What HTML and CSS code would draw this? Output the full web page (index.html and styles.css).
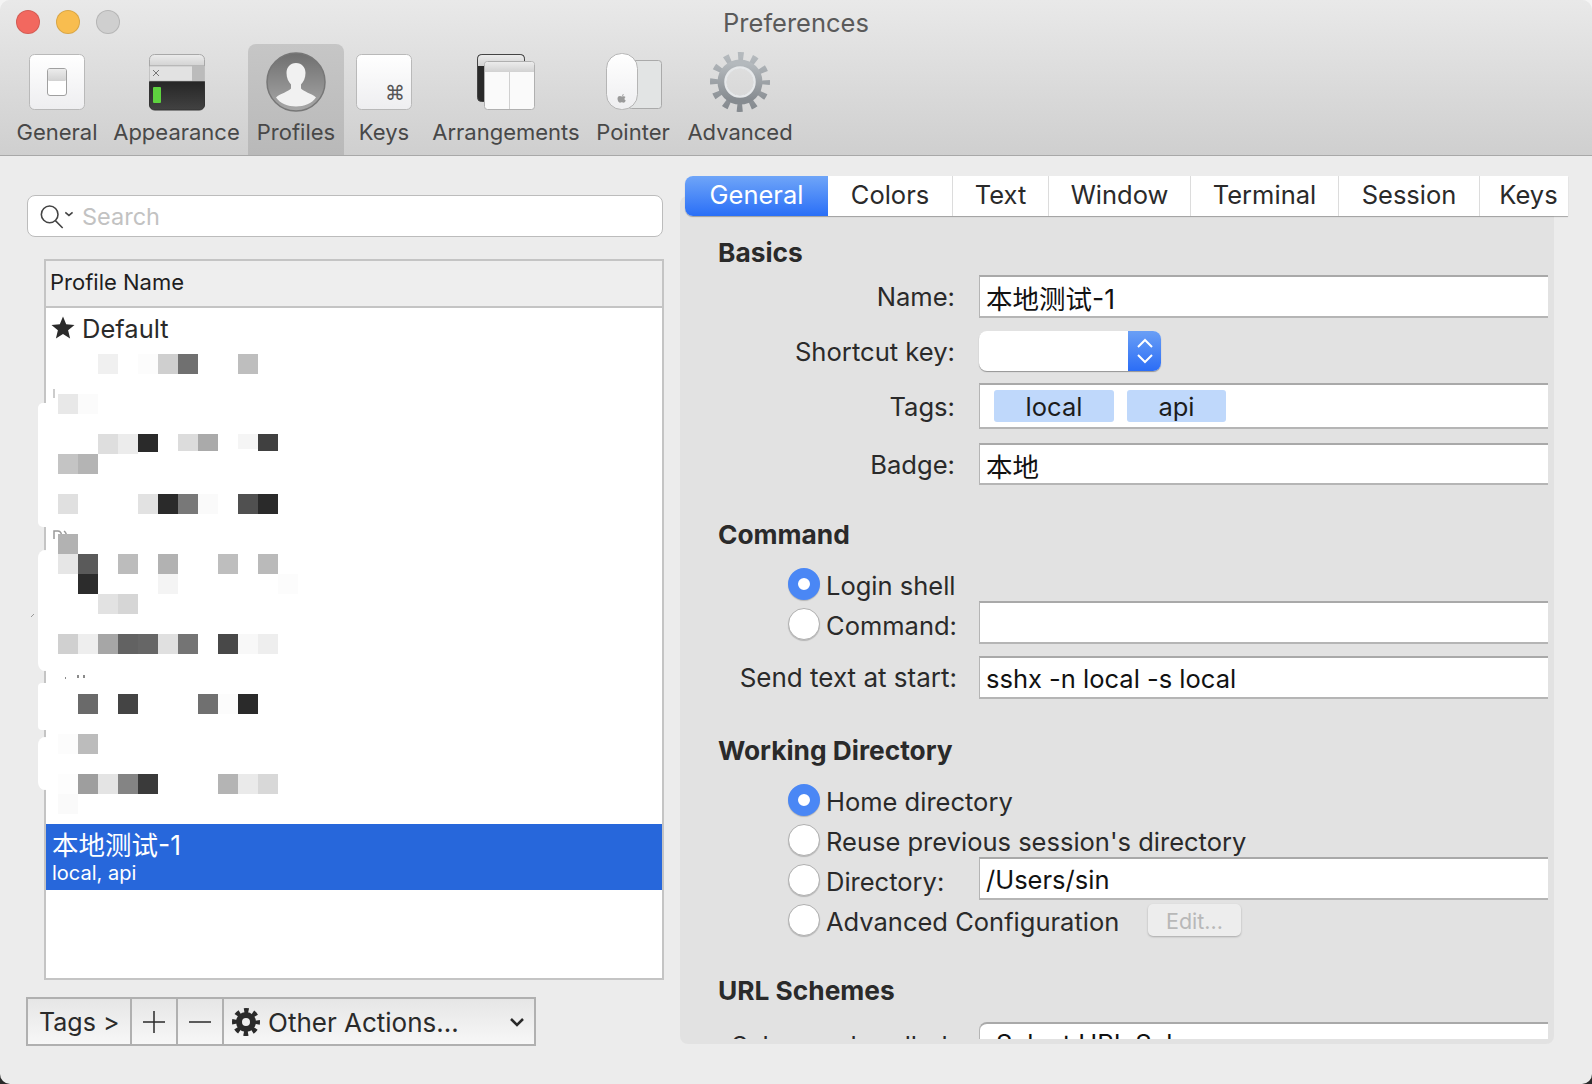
FILE: index.html
```html
<!DOCTYPE html>
<html lang="en">
<head>
    <meta charset="UTF-8">
    <title>Preferences</title>
    <link rel="stylesheet" href="styles.css">
</head>
<body>
<div class="window">
    <div class="toolbar">
        <div class="titlebar">
            <div class="lights">
                <span class="light red"></span>
                <span class="light yellow"></span>
                <span class="light grey"></span>
            </div>
            <div class="title">Preferences</div>
        </div>
        <div class="tools">
            <div class="tool">
                <svg viewBox="0 0 60 60" width="60" height="60">
                    <defs>
                        <linearGradient id="paper" x1="0" y1="0" x2="0" y2="1"><stop offset="0" stop-color="#fff"/><stop offset="1" stop-color="#eeeef0"/></linearGradient>
                        <linearGradient id="stripe" x1="0" y1="0" x2="0" y2="1"><stop offset="0" stop-color="#ececec"/><stop offset="1" stop-color="#d2d2d2"/></linearGradient>
                    </defs>
                    <rect x="2.500" y="2.500" width="55" height="55" rx="5" fill="url(#paper)" stroke="#b9b9b9"/>
                    <rect x="20.500" y="16.500" width="19" height="27" rx="2.500" fill="#fff" stroke="#a0a0a0"/>
                    <rect x="21" y="17" width="18" height="12" rx="1.500" fill="url(#stripe)"/>
                </svg>
                <span>General</span>
            </div>
            <div class="tool">
                <svg viewBox="0 0 60 60" width="60" height="60">
                    <defs>
                        <linearGradient id="term" x1="0" y1="0" x2="0" y2="1"><stop offset="0" stop-color="#262626"/><stop offset="1" stop-color="#424242"/></linearGradient>
                    </defs>
                    <path d="M2.500 29.500h55V53a5 5 0 0 1-5 5h-45a5 5 0 0 1-5-5z" fill="url(#term)" stroke="#333"/>
                    <path d="M2.500 14V7.500a5 5 0 0 1 5-5h45a5 5 0 0 1 5 5V14z" fill="url(#stripe)" stroke="#a8a8a8"/>
                    <rect x="2.500" y="14" width="55" height="15" fill="#e2e2e2" stroke="#a8a8a8" stroke-width="0.500"/>
                    <rect x="45" y="14" width="12.500" height="15" fill="#bbb"/>
                    <path d="M6 18l6 6m0-6l-6 6" stroke="#777" stroke-width="1" fill="none"/>
                    <rect x="6" y="35" width="8" height="16" rx="1" fill="#5ed23f"/>
                </svg>
                <span>Appearance</span>
            </div>
            <div class="tool active">
                <svg viewBox="0 0 60 60" width="60" height="60">
                    <defs>
                        <linearGradient id="disc" x1="0" y1="0" x2="0" y2="1"><stop offset="0" stop-color="#6f6f6f"/><stop offset="1" stop-color="#a8a8a8"/></linearGradient>
                    </defs>
                    <circle cx="30" cy="30" r="29" fill="url(#disc)" stroke="#777" stroke-width="1.500"/>
                    <path d="M30 11c-6 0-9.500 4.500-9.500 10 0 5 2 9 4.500 11.500v4c-2 3-11 5-15 9 4 6 12 9 20 9s16-3 20-9c-4-4-13-6-15-9v-4c2.500-2.500 4.500-6.500 4.500-11.500 0-5.500-3.500-10-9.500-10z" fill="#f1f1f1"/>
                </svg>
                <span>Profiles</span>
            </div>
            <div class="tool">
                <svg viewBox="0 0 60 60" width="60" height="60">
                    <rect x="2.500" y="2.500" width="55" height="55" rx="5" fill="url(#paper)" stroke="#b9b9b9"/>
                    <text x="41" y="48" text-anchor="middle" class="cmd">⌘</text>
                </svg>
                <span>Keys</span>
            </div>
            <div class="tool">
                <svg viewBox="0 0 60 60" width="60" height="60">
                    <rect x="1.500" y="2.500" width="47" height="47" rx="4" fill="#2a2a2a" stroke="#444"/>
                    <path d="M2 14V7a4 4 0 0 1 4-4h38a4 4 0 0 1 4 4v7z" fill="url(#stripe)"/>
                    <rect x="8.500" y="9.500" width="50" height="48" rx="3" fill="#fafafa" stroke="#b0b0b0"/>
                    <path d="M9 20v-7a3 3 0 0 1 3-3h43a3 3 0 0 1 3 3v7z" fill="url(#stripe)"/>
                    <path d="M33.500 20v37" stroke="#d0d0d0" fill="none"/>
                </svg>
                <span>Arrangements</span>
            </div>
            <div class="tool">
                <svg viewBox="0 0 60 60" width="60" height="60">
                    <rect x="25.500" y="8.500" width="33" height="48" rx="3" fill="#e2e4e4" stroke="#aaa"/>
                    <rect x="3.500" y="1.500" width="31" height="56" rx="15" fill="url(#paper)" stroke="#b5b5b5"/>
                    <path d="M19 44.500c1.500-.5 3-.3 3.500.5-1.500 1-1.300 3 .3 3.500-.5 1.200-1.200 2.200-2.200 2.200-.8 0-1-.4-1.800-.4s-1 .4-1.800.4c-1.300 0-2.500-2.300-2.500-4 0-2 1.300-2.700 2.400-2.700.8 0 1.300.4 2.100.5zM19 44c0-1 .7-1.800 1.700-2 .1 1-.7 2-1.700 2z" fill="#9a9a9a"/>
                </svg>
                <span>Pointer</span>
            </div>
            <div class="tool">
                <svg viewBox="0 0 60 60" width="60" height="60">
                    <defs>
                        <linearGradient id="steel" x1="0" y1="0" x2="0" y2="1"><stop offset="0" stop-color="#b4b9bd"/><stop offset="1" stop-color="#868b90"/></linearGradient>
                    </defs>
                    <circle cx="30" cy="30" r="25.500" fill="none" stroke="url(#steel)" stroke-width="9" stroke-dasharray="5.500 7.852" stroke-dashoffset="2.750"/>
                    <circle cx="30" cy="30" r="18" fill="none" stroke="url(#steel)" stroke-width="9"/>
                    <circle cx="30" cy="30" r="14.500" fill="none" stroke="#e6e8ea" stroke-width="2.500"/>
                </svg>
                <span>Advanced</span>
            </div>
        </div>
    </div>

    <div class="content">
        <div class="left">
            <div class="search">
                <svg viewBox="0 0 36 24" width="38" height="25">
                    <circle cx="10" cy="10" r="8" fill="none" stroke="#444" stroke-width="1.500"/>
                    <path d="M15.500 16l7 7M25 8l3.500 3 3.500-3" stroke="#444" stroke-width="1.500" fill="none"/>
                </svg>
                <span>Search</span>
            </div>
            <div class="list">
                <div class="list_head">Profile Name</div>
                <div class="list_row">
                    <svg viewBox="0 0 24 24" width="24" height="24"><polygon points="12,0.500 15.200,8.300 23.500,8.900 17.100,14.300 19.100,22.500 12,18 4.900,22.500 6.900,14.300 0.500,8.900 8.800,8.300" fill="#2b2b2b"/></svg>
                    Default
                </div>
                <div class="mosaic_wrap">
                    <!-- 打码的部分 -->
                    <svg class="mosaic" viewBox="28 350 300 474" width="300" height="474" shape-rendering="crispEdges">
                        <g fill="#fff" shape-rendering="auto">
                            <rect x="38" y="403" width="14" height="124" rx="5"/>
                            <rect x="38" y="550" width="14" height="121" rx="8"/>
                            <rect x="38" y="683" width="14" height="47" rx="4"/>
                            <rect x="38" y="737" width="14" height="53" rx="8"/>
                        </g>
                        <g shape-rendering="auto" fill="none" stroke="#999">
                            <path d="M54 389v9" stroke-width="1"/>
                            <path d="M54 539v-8h4c3 0 4 3 4 8M64 531c3 2 3 5 3 8" stroke-width="1.500"/>
                            <path d="M31 617l3-3" stroke-width="1"/>
                            <path d="M65 678h1M78 675v3M84 675v3" stroke="#666" stroke-width="1.500"/>
                        </g>
                        <rect x="98" y="354" width="20" height="20" fill="#f0f0f0"/>
                        <rect x="138" y="354" width="20" height="20" fill="#fcfcfc"/>
                        <rect x="158" y="354" width="20" height="20" fill="#cfcfcf"/>
                        <rect x="178" y="354" width="20" height="20" fill="#707070"/>
                        <rect x="238" y="354" width="20" height="20" fill="#bebebe"/>
                        <rect x="58" y="394" width="20" height="20" fill="#e8e8e8"/>
                        <rect x="78" y="394" width="20" height="20" fill="#fbfbfb"/>
                        <rect x="98" y="434" width="20" height="20" fill="#dedede"/>
                        <rect x="118" y="434" width="20" height="20" fill="#ececec"/>
                        <rect x="138" y="434" width="20" height="18" fill="#2a2a2a"/>
                        <rect x="178" y="434" width="20" height="17" fill="#dcdcdc"/>
                        <rect x="198" y="434" width="20" height="17" fill="#aaaaaa"/>
                        <rect x="238" y="434" width="20" height="15" fill="#f5f5f5"/>
                        <rect x="258" y="434" width="20" height="17" fill="#404040"/>
                        <rect x="58" y="454" width="20" height="20" fill="#c4c4c4"/>
                        <rect x="78" y="454" width="20" height="20" fill="#b4b4b4"/>
                        <rect x="58" y="494" width="20" height="20" fill="#e0e0e0"/>
                        <rect x="138" y="494" width="20" height="20" fill="#e2e2e2"/>
                        <rect x="158" y="494" width="20" height="20" fill="#2a2a2a"/>
                        <rect x="178" y="494" width="20" height="20" fill="#787878"/>
                        <rect x="198" y="494" width="20" height="20" fill="#fafafa"/>
                        <rect x="238" y="494" width="20" height="20" fill="#505050"/>
                        <rect x="258" y="494" width="20" height="20" fill="#2a2a2a"/>
                        <rect x="58" y="534" width="20" height="20" fill="#b2b2b2"/>
                        <rect x="58" y="554" width="20" height="20" fill="#e6e6e6"/>
                        <rect x="78" y="554" width="20" height="20" fill="#5a5a5a"/>
                        <rect x="118" y="554" width="20" height="20" fill="#bcbcbc"/>
                        <rect x="158" y="554" width="20" height="20" fill="#b2b2b2"/>
                        <rect x="218" y="554" width="20" height="20" fill="#bebebe"/>
                        <rect x="258" y="554" width="20" height="20" fill="#bababa"/>
                        <rect x="78" y="574" width="20" height="20" fill="#2c2c2c"/>
                        <rect x="158" y="574" width="20" height="20" fill="#f4f4f4"/>
                        <rect x="278" y="574" width="20" height="20" fill="#fcfcfc"/>
                        <rect x="98" y="594" width="20" height="20" fill="#e2e2e2"/>
                        <rect x="118" y="594" width="20" height="20" fill="#d6d6d6"/>
                        <rect x="58" y="634" width="20" height="20" fill="#d0d0d0"/>
                        <rect x="78" y="634" width="20" height="20" fill="#eeeeee"/>
                        <rect x="98" y="634" width="20" height="20" fill="#a6a6a6"/>
                        <rect x="118" y="634" width="20" height="20" fill="#626262"/>
                        <rect x="138" y="634" width="20" height="20" fill="#666666"/>
                        <rect x="158" y="634" width="20" height="20" fill="#e0e0e0"/>
                        <rect x="178" y="634" width="20" height="20" fill="#747474"/>
                        <rect x="218" y="634" width="20" height="20" fill="#484848"/>
                        <rect x="238" y="634" width="20" height="20" fill="#f8f8f8"/>
                        <rect x="258" y="634" width="20" height="20" fill="#eeeeee"/>
                        <rect x="78" y="694" width="20" height="20" fill="#6a6a6a"/>
                        <rect x="118" y="694" width="20" height="20" fill="#444444"/>
                        <rect x="198" y="694" width="20" height="20" fill="#707070"/>
                        <rect x="218" y="694" width="20" height="20" fill="#fcfcfc"/>
                        <rect x="238" y="694" width="20" height="20" fill="#2a2a2a"/>
                        <rect x="58" y="734" width="20" height="20" fill="#fcfcfc"/>
                        <rect x="78" y="734" width="20" height="20" fill="#bcbcbc"/>
                        <rect x="58" y="774" width="20" height="20" fill="#fdfdfd"/>
                        <rect x="78" y="774" width="20" height="20" fill="#9e9e9e"/>
                        <rect x="98" y="774" width="20" height="20" fill="#e4e4e4"/>
                        <rect x="118" y="774" width="20" height="20" fill="#848484"/>
                        <rect x="138" y="774" width="20" height="20" fill="#3a3a3a"/>
                        <rect x="218" y="774" width="20" height="20" fill="#b4b4b4"/>
                        <rect x="238" y="774" width="20" height="20" fill="#eaeaea"/>
                        <rect x="258" y="774" width="20" height="20" fill="#d8d8d8"/>
                        <rect x="58" y="794" width="20" height="20" fill="#fafafa"/>
                    </svg>
                </div>
                <div class="list_selected">
                    <div class="sel_name">本地测试-1</div>
                    <div class="sel_tags">local, api</div>
                </div>
            </div>
            <div class="actions">
                <div class="act act_tags">Tags &gt;</div>
                <div class="act act_icon">
                    <svg viewBox="0 0 22 22" width="22" height="22"><path d="M11 0v22M0 11h22" stroke="#2a2a2a" stroke-width="1.500" fill="none"/></svg>
                </div>
                <div class="act act_icon">
                    <svg viewBox="0 0 22 22" width="22" height="22"><path d="M0 11h22" stroke="#2a2a2a" stroke-width="1.500" fill="none"/></svg>
                </div>
                <div class="act act_other">
                    <svg viewBox="0 0 28 28" width="28" height="28">
                        <circle cx="14" cy="14" r="11.500" fill="none" stroke="#2a2a2a" stroke-width="5" stroke-dasharray="4.500 4.530" stroke-dashoffset="2.250"/>
                        <circle cx="14" cy="14" r="7" fill="none" stroke="#2a2a2a" stroke-width="6"/>
                    </svg>
                    <span>Other Actions...</span>
                    <svg class="chev" viewBox="0 0 16 10" width="16" height="10"><path d="M2 2l6 6 6-6" stroke="#2a2a2a" stroke-width="2.500" fill="none"/></svg>
                </div>
            </div>
        </div>

        <div class="right">
            <div class="tabs">
                <div class="tab on">General</div>
                <div class="tab">Colors</div>
                <div class="tab">Text</div>
                <div class="tab">Window</div>
                <div class="tab">Terminal</div>
                <div class="tab">Session</div>
                <div class="tab">Keys</div>
            </div>
            <div class="panel">
                <div class="panel_inner">
                    <h3 class="h_basics">Basics</h3>
                    <div class="row r_name"><label>Name:</label><div class="field field_cjk">本地测试-1</div></div>
                    <div class="row r_short">
                        <label>Shortcut key:</label>
                        <div class="shortcut">
                            <span class="stepper">
                                <svg viewBox="0 0 20 30" width="20" height="30"><path d="M3 11l7-7 7 7M3 19l7 7 7-7" stroke="#fff" stroke-width="2" fill="none"/></svg>
                            </span>
                        </div>
                    </div>
                    <div class="row r_tags">
                        <label>Tags:</label>
                        <div class="field field_tags"><span class="tag t_local">local</span><span class="tag t_api">api</span></div>
                    </div>
                    <div class="row r_badge"><label>Badge:</label><div class="field field_cjk">本地</div></div>

                    <h3 class="h_command">Command</h3>
                    <div class="row opt r_login"><div class="radio_col"><span class="radio on"></span>Login shell</div></div>
                    <div class="row opt"><div class="radio_col"><span class="radio"></span>Command:</div><div class="field"></div></div>
                    <div class="row r_send"><label class="wide">Send text at start:</label><div class="field">sshx -n local -s local</div></div>

                    <h3 class="h_dir">Working Directory</h3>
                    <div class="row opt r_home"><div class="radio_col"><span class="radio on"></span>Home directory</div></div>
                    <div class="row opt"><div class="radio_col long"><span class="radio"></span>Reuse previous session's directory</div></div>
                    <div class="row opt"><div class="radio_col"><span class="radio"></span>Directory:</div><div class="field">/Users/sin</div></div>
                    <div class="row opt"><div class="radio_col adv"><span class="radio"></span>Advanced Configuration</div><div class="edit_btn">Edit...</div></div>

                    <h3 class="h_url">URL Schemes</h3>
                    <div class="row r_schemes"><label>Schemes handled:</label><div class="field field_select">Select URL Schemes...</div></div>
                </div>
            </div>
        </div>
    </div>
</div>
</body>
</html>
```

FILE: styles.css
```css
* {
    box-sizing: border-box;
}

html {
    background: linear-gradient(to bottom, #f4f4f4 0, #f4f4f4 50%, #2a2a2a 50%, #2a2a2a 100%);
}

body {
    margin: 0;
    font-family: Inter, "Noto Sans CJK SC", sans-serif;
    font-size: 25.5px;
    color: #2a2a2a;
}

.window {
    width: 1592px;
    height: 1084px;
    background-color: #ececec;
    border-radius: 10px;
    overflow: hidden;
}

/* 顶部工具栏 */
.toolbar {
    height: 156px;
    background: linear-gradient(to bottom, #e9e9e9, #cfcfcf);
    border-bottom: 1px solid #a8a8a8;
}

.titlebar {
    height: 44px;
    display: grid;
    grid-template-columns: 1fr auto 1fr;
    align-items: center;
}

.lights {
    display: flex;
    gap: 16px;
    padding-left: 16px;
}

.light {
    width: 24px;
    height: 24px;
    border-radius: 50%;
    border: 1px solid rgba(0, 0, 0, 0.12);
}

.red { background-color: #f2685f; }
.yellow { background-color: #f8bd4f; }
.grey { background-color: #cfcfcf; }

.title {
    color: #5a5a5a;
}

.tools {
    display: grid;
    grid-template-columns: 96px 143px 96px 80px 164px 90px 124px;
    padding-left: 9px;
    height: 111px;
}

.tool {
    display: flex;
    flex-direction: column;
    align-items: center;
    padding-top: 8px;
    color: #484848;
    white-space: nowrap;
    font-size: 22px;
}

.tool span {
    margin-top: 5px;
    line-height: 30px;
}

.tool.active {
    background: linear-gradient(to bottom, #c6c6c6, #b9b9b9);
    border-radius: 8px 8px 0 0;
}

.cmd {
    font-family: "DejaVu Sans", sans-serif;
    font-size: 20px;
    fill: #555;
}

.content {
    display: flex;
}

/* 左边的列表 */
.left {
    width: 680px;
    padding: 39px 0 0 27px;
}

.search {
    width: 636px;
    height: 42px;
    background-color: #fff;
    border: 1.5px solid #bcbcbc;
    border-radius: 8px;
    display: flex;
    align-items: center;
    gap: 5px;
    padding-left: 11px;
    color: #c2c2c2;
    font-size: 23.5px;
}

.search span {
    padding-top: 1px;
}

.list {
    width: 620px;
    height: 721px;
    margin: 22px 0 0 17px;
    background-color: #fff;
    border: 2px solid #c4c4c4;
    display: flex;
    flex-direction: column;
}

.list_head {
    height: 47px;
    background-color: #eeeeee;
    border-bottom: 2px solid #c4c4c4;
    display: flex;
    align-items: center;
    padding: 0 0 3px 4px;
    font-size: 22px;
    color: #1e1e1e;
}

.list_row {
    height: 42px;
    display: flex;
    align-items: center;
    gap: 7px;
    padding: 0 0 2px 5px;
    flex-shrink: 0;
}

.mosaic_wrap {
    height: 474px;
    position: relative;
}

.mosaic {
    position: absolute;
    left: -18px;
    top: 0;
}

.list_selected {
    height: 66px;
    background-color: #2767db;
    color: #fff;
    padding: 5px 0 0 6px;
}

.sel_name {
    line-height: 32px;
    font-size: 26.5px;
}

.sel_tags {
    font-size: 20px;
    line-height: 24px;
}

.actions {
    width: 510px;
    height: 49px;
    margin: 17px 0 0 -1px;
    display: flex;
    border: 2px solid #b0b0b0;
    background: linear-gradient(to bottom, #e6e6e6, #f7f7f7);
    font-size: 26px;
}

.act {
    display: flex;
    align-items: center;
    justify-content: center;
    border-right: 2px solid #b0b0b0;
    padding-top: 1px;
}

.act_tags {
    width: 104px;
    justify-content: flex-start;
    padding-left: 11px;
    font-size: 25px;
}

.act_icon { width: 46px; }

.act_other {
    flex: 1;
    border-right: 0;
    justify-content: flex-start;
    gap: 8px;
    padding-left: 8px;
}

.chev {
    margin-left: auto;
    margin-right: 9px;
}

/* 右边的设置面板 */
.right {
    width: 888px;
    padding-top: 20px;
}

.tabs {
    position: relative;
    display: grid;
    grid-template-columns: 143px 125px 96px 142px 148px 141px 88px;
    height: 40px;
    margin-left: 5px;
    background-color: #fff;
    border-radius: 8px 0 0 8px;
    box-shadow: 0 1px 1px rgba(0, 0, 0, 0.3);
}

.tab {
    display: flex;
    align-items: center;
    justify-content: center;
    padding-bottom: 3px;
    border-right: 1px solid #dcdcdc;
}

.tab:last-child {
    border-right: 0;
    padding-left: 9px;
}

.tab.on {
    color: #fff;
    background: linear-gradient(to bottom, #6fa5f8, #2a6ff7);
    border-radius: 8px 0 0 8px;
    border-right: 0;
}

.panel {
    width: 874px;
    height: 848px;
    margin-top: -20px;
    padding: 0 6px 5px 0;
    background-color: #e2e2e2;
    border-radius: 8px;
}

.panel_inner {
    height: 843px;
    overflow: hidden;
    padding-top: 45px;
}

h3 {
    margin: 0 0 0 38px;
    font-size: 26.3px;
    font-weight: 700;
    line-height: 24px;
}

.h_command { margin-top: 38px; }
.h_url { margin-top: 39px; }
.h_dir { margin-top: 40px; }

.row {
    display: flex;
    align-items: center;
    height: 42px;
}

.row label {
    width: 275px;
    margin-right: 24px;
    text-align: right;
    flex-shrink: 0;
    font-size: 25.6px;
}

.row label.wide {
    width: 277px;
    margin-right: 22px;
    font-size: 26px;
}

.r_name { margin-top: 10px; height: 43px; }
.r_short { margin-top: 13px; height: 40px; }
.r_tags { margin-top: 12px; height: 46px; }
.r_badge { margin-top: 14px; }
.r_send { margin-top: 12px; height: 43px; }
.r_schemes { margin-top: 19px; }

.r_schemes label {
    padding-top: 5px;
}

.field {
    flex: 1;
    height: 100%;
    background-color: #fff;
    border-top: 2px solid #a9a9a9;
    border-bottom: 2px solid #b5b5b5;
    border-left: 1px solid #b5b5b5;
    display: flex;
    align-items: center;
    padding: 2px 0 0 6px;
    color: #111;
}

.field_cjk {
    font-size: 26.5px;
}

.field_tags {
    gap: 13px;
    padding: 0 0 0 14px;
}

.field_select {
    border-radius: 8px 0 0 0;
    border-bottom: 0;
    padding: 0 0 1px 16px;
}

.tag {
    height: 32px;
    background-color: #bfd8fb;
    border-radius: 3px;
    display: flex;
    align-items: center;
    justify-content: center;
    color: #1c1c1c;
}

.t_local { width: 120px; }
.t_api { width: 99px; }

.shortcut {
    width: 182px;
    height: 100%;
    background-color: #fff;
    border-radius: 8px;
    box-shadow: 0 1px 1px rgba(0, 0, 0, 0.35);
    overflow: hidden;
    display: flex;
    justify-content: flex-end;
}

.stepper {
    width: 33px;
    background: linear-gradient(to bottom, #6a9ff5, #2b6df6);
    display: flex;
    align-items: center;
    justify-content: center;
}

.opt {
    height: 40px;
}

.opt .field {
    height: 43px;
    flex: 1;
    align-self: flex-start;
    margin-top: -3px;
}

.r_login { margin-top: 17px; }
.r_home { margin-top: 17px; }

.radio_col {
    width: 299px;
    flex-shrink: 0;
    display: flex;
    align-items: center;
    gap: 6px;
    padding: 2px 0 0 108px;
    white-space: nowrap;
}

.radio {
    width: 32px;
    height: 32px;
    margin-top: -2px;
    border-radius: 50%;
    background-color: #fff;
    border: 1px solid #b0b0b0;
    box-shadow: 0 1px 1px rgba(0, 0, 0, 0.2);
    flex-shrink: 0;
}

.radio.on {
    background-color: #fff;
    border: 10px solid #4a87f5;
}

.radio_col.adv {
    width: 468px;
}

.edit_btn {
    width: 93px;
    height: 32px;
    background-color: #ededed;
    border-radius: 5px;
    box-shadow: 0 1px 2px rgba(0, 0, 0, 0.25);
    color: #b8b8b8;
    font-size: 21.5px;
    display: flex;
    align-items: center;
    justify-content: center;
    padding-top: 1px;
}
```
